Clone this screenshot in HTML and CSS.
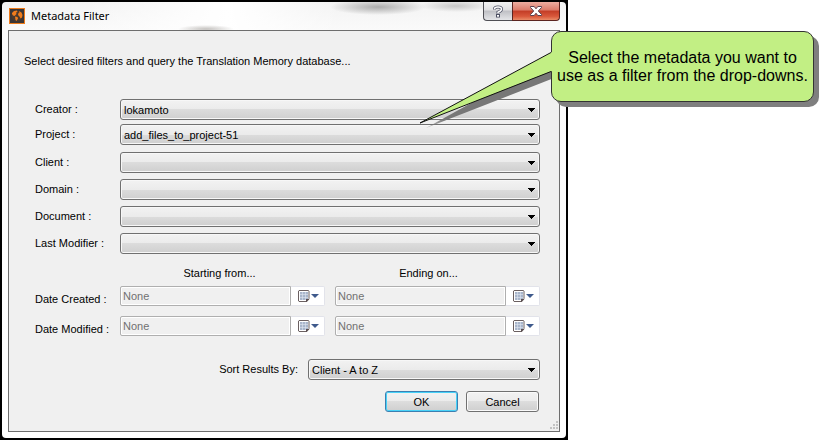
FILE: index.html
```html
<!DOCTYPE html>
<html lang="en">
<head>
<meta charset="utf-8">
<title>Metadata Filter</title>
<link rel="stylesheet" href="styles.css">
</head>
<body>
<svg class="defs" aria-hidden="true">
  <symbol id="calendar" viewBox="0 0 12 12">
    <path d="M1 .5h9.500l.5.5v7.500l-2 3H1l-.5-.5V1z" fill="#fff" stroke="#6b6061"/>
    <rect x="2" y="2" width="8" height="8" fill="#a9b6cb"/>
    <path d="M2 4.500h8M2 7.500h8M4.500 2v8M7.500 2v8" stroke="#dfe6f0" stroke-width=".6"/>
    <path d="M8 12V9h3.500z" fill="#5c5052"/>
  </symbol>
</svg>
<main class="stage">
  <section class="window">
    <header class="titlebar">
      <svg class="app-icon" viewBox="0 0 16 16" aria-hidden="true">
        <rect x=".5" y=".5" width="15" height="15" fill="#3b3636" stroke="#ee7b1a"/>
        <circle cx="8" cy="8" r="5.500" fill="#4b3a2e"/>
        <path d="M3 5l2-2 3-.5.5 1.500-1.500.5.5 1.500L5.500 8 4 7.500 3 6z M6 8.500l2.500.5.5 1.500L7.500 13 6.500 12z M10 3l2.500 1.500 1 2.500-.5 2.500-1.500 1L10.500 8.500 9 7l.5-2 1-.5z" fill="#f07c1c"/>
      </svg>
      <h1 class="title">Metadata Filter</h1>
      <div class="caption-buttons">
        <button class="caption help" aria-label="Help">
          <svg viewBox="0 0 10 13" width="10" height="13"><g fill="none"><path d="M1.500 4.500V4q0-2 3.500-2t3.500 2-3.500 3.200v1.600" stroke="#4c4f63" stroke-width="3"/><rect x="3" y="9" width="4" height="3.500" fill="#4c4f63"/><path d="M1.500 4.300V4q0-2 3.500-2t3.500 2-3.500 3.200v1.300" stroke="#fff" stroke-width="1.500"/><rect x="4" y="10" width="2" height="1.700" fill="#fff"/></g></svg>
        </button>
        <button class="caption close" aria-label="Close">
          <svg viewBox="0 0 12 10" width="12" height="10"><path d="M.5.5h3.700L6 2.800 7.800.5h3.700v1L8.300 5l3.200 3.500v1H7.800L6 7.200 4.200 9.500H.5v-1L3.700 5 .5 1.500z" fill="#fff" stroke="#5a4350"/></svg>
        </button>
      </div>
    </header>
    <form class="panel" onsubmit="return false">
      <p class="intro">Select desired filters and query the Translation Memory database...</p>
      <div class="fields">
        <div class="group">
          <label for="creator">Creator :</label>
          <select id="creator"><option>lokamoto</option></select>
          <label for="project">Project :</label>
          <select id="project"><option>add_files_to_project-51</option></select>
        </div>
        <div class="group roomy">
          <label for="client">Client :</label>
          <select id="client"><option></option></select>
          <label for="domain">Domain :</label>
          <select id="domain"><option></option></select>
          <label for="document">Document :</label>
          <select id="document"><option></option></select>
          <label for="modifier">Last Modifier :</label>
          <select id="modifier"><option></option></select>
        </div>
        <div class="dates">
          <span class="head start">Starting from...</span>
          <span class="head end">Ending on...</span>
          <label for="created-from">Date Created :</label>
          <div class="date"><input id="created-from" value="None" disabled><button aria-label="Pick created start date"><svg class="cal"><use href="#calendar"/></svg><i class="arrow"></i></button></div>
          <div class="date"><input aria-label="Date created, ending on" value="None" disabled><button aria-label="Pick created end date"><svg class="cal"><use href="#calendar"/></svg><i class="arrow"></i></button></div>
          <label for="modified-from">Date Modified :</label>
          <div class="date"><input id="modified-from" value="None" disabled><button aria-label="Pick modified start date"><svg class="cal"><use href="#calendar"/></svg><i class="arrow"></i></button></div>
          <div class="date"><input aria-label="Date modified, ending on" value="None" disabled><button aria-label="Pick modified end date"><svg class="cal"><use href="#calendar"/></svg><i class="arrow"></i></button></div>
        </div>
        <div class="sort">
          <label for="sort">Sort Results By:</label>
          <select id="sort"><option>Client - A to Z</option></select>
        </div>
        <div class="actions">
          <button class="push primary">OK</button>
          <button class="push">Cancel</button>
        </div>
      </div>
      <svg class="grip" viewBox="0 0 9 9" aria-hidden="true"><path d="M7 0h2v2H7zM7 3h2v2H7zM7 6h2v2H7zM4 3h2v2H4zM4 6h2v2H4zM1 6h2v2H1z" fill="#c3c3c3"/></svg>
    </form>
  </section>
  <aside class="callout">
    <svg class="tail" viewBox="0 0 140 84" aria-hidden="true">
      <defs><linearGradient id="fade"><stop offset="0" stop-color="#777" stop-opacity=".4"/><stop offset=".15" stop-color="#777"/></linearGradient></defs>
      <path d="M10 82L138 11V32z" fill="url(#fade)"/>
    </svg>
    <p class="bubble">Select the metadata you want to<br>use as a filter from the drop-downs.</p>
    <svg class="tail" viewBox="0 0 140 84" aria-hidden="true">
      <path d="M136 6L4 77L136 25z" fill="#c2ef84"/>
      <path d="M135 6.500L4 77L135 25.500" fill="none" stroke="#111" stroke-linejoin="bevel"/>
    </svg>
  </aside>
</main>
</body>
</html>
```
FILE: styles.css
```css
* { box-sizing: border-box; }

body {
  margin: 0;
  background: #fff;
  color: #000;
  font: 11px/16px "Liberation Sans", Arial, sans-serif;
}

button, input, select { font: inherit; color: inherit; margin: 0; }
h1, p { margin: 0; }
.defs { display: none; }

.stage {
  position: relative;
  padding-right: 261px;
  background: linear-gradient(90deg, #000, #000) content-box;
}

.window {
  border: 2px solid #000;
  border-radius: 6px;
  padding: 0 6px 6px;
  background:
    radial-gradient(ellipse 48px 8px at 376px 5px, #999c, #9990) no-repeat,
    radial-gradient(ellipse 36px 6px at 454px 4px, #aaa9, #aaa0) no-repeat,
    radial-gradient(ellipse 28px 4px at 204px 27px, #a8a4a0aa, #a8a4a000) no-repeat,
    linear-gradient(90deg, #f3f3f300 15%, #fff 40%, #f3f3f300 60%) no-repeat,
    linear-gradient(#f3f3f3, #fafafa 28px, #fff) no-repeat;
  background-color: #fff;
}

.titlebar {
  display: flex;
  align-items: flex-start;
  height: 28px;
}
.app-icon { width: 16px; height: 16px; margin: 6px 6px 0 1px; }
.title { flex: 1; margin-top: 6px; font: 11px/16px "Noto Sans", "Open Sans", sans-serif; }

.caption-buttons { display: flex; }
.caption {
  display: flex;
  align-items: center;
  justify-content: center;
  height: 19px;
  padding: 0;
  border: 1px solid #4f4f55;
  border-top: 0;
}
.help {
  width: 29px;
  border-radius: 0 0 0 4px;
  border-right: 0;
  background: linear-gradient(#f2f2f2, #dedee0 45%, #bfc0c5 50%, #e4e5e8);
}
.close {
  width: 48px;
  border-color: #5b2420;
  border-radius: 0 0 4px 0;
  background: linear-gradient(#edada0, #dc7a69 45%, #c33c26 50%, #d9593c 80%, #e98c68);
}

.panel {
  position: relative;
  border: 1px solid #6e6e6e;
  padding: 22px 19px 19px 15px;
  background: #f0f0f0;
}
.fields { margin: 30px 0 0 11px; }

.group {
  display: grid;
  grid-template-columns: 85px 1fr;
  row-gap: 4px;
  align-items: center;
}
.group label, .sort label { padding-bottom: 2px; }
.roomy { row-gap: 6px; margin-top: 7px; }

select {
  width: 100%;
  height: 21px;
  padding: 1px 20px 0 3px;
  appearance: none;
  border: 1px solid #707070;
  border-radius: 3px;
  box-shadow: inset 0 0 0 1px #f7f7f7;
  background:
    linear-gradient(#000, #000) right 4px top 8px / 7px 1px no-repeat,
    linear-gradient(#000, #000) right 5px top 9px / 5px 1px no-repeat,
    linear-gradient(#000, #000) right 6px top 10px / 3px 1px no-repeat,
    linear-gradient(#000, #000) right 7px top 11px / 1px 1px no-repeat,
    linear-gradient(#f2f2f2, #ebebeb 50%, #dcdcdc 50%, #cfcfcf);
}

.dates {
  display: grid;
  grid-template-columns: 75px 1fr 1fr;
  gap: 10px;
  margin-top: 11px;
}
.dates label { padding-top: 5px; height: 20px; white-space: nowrap; }
.head { text-align: center; margin-bottom: -5px; }
.start { grid-column: 2; padding-right: 6px; }
.end { padding-right: 18px; }

.date { display: flex; height: 20px; }
.date input {
  flex: 1;
  min-width: 0;
  padding: 0 2px;
  border: 1px solid #afafaf;
  border-radius: 2px 0 0 2px;
  box-shadow: inset 0 0 0 1px #fff;
  background: #f0f0f0;
  color: #707070;
}
.date button {
  display: flex;
  align-items: center;
  width: 34px;
  padding: 0 0 0 7px;
  border: 1px solid #e2e3ea;
  border-left: 0;
  border-radius: 0 2px 2px 0;
  background: #fff;
}
.cal { width: 12px; height: 12px; }
.arrow {
  margin-left: 1px;
  border: 4px solid transparent;
  border-top-color: #3f5a8c;
  border-bottom: 0;
}

.sort {
  display: grid;
  grid-template-columns: 1fr 232px;
  column-gap: 10px;
  align-items: center;
  margin-top: 23px;
  text-align: right;
}

.actions { display: flex; justify-content: flex-end; gap: 8px; margin-top: 11px; padding-right: 1px; }
.push {
  width: 73px;
  height: 21px;
  padding: 0;
  border: 1px solid #707070;
  border-radius: 3px;
  box-shadow: inset 0 0 0 1px #fafafa;
  background: linear-gradient(#f2f2f2, #ebebeb 50%, #dddddd 50%, #cfcfcf);
}
.primary { border-color: #3c7fb1; box-shadow: inset 0 0 0 1px #48d2f8; }

.grip { position: absolute; right: 1px; bottom: 1px; width: 9px; height: 9px; }

.callout { position: absolute; top: 31px; right: 15px; width: 263px; }
.bubble {
  position: relative;
  height: 71px;
  padding-top: 17px;
  border: 1px solid #333;
  border-radius: 10px;
  background: #c2ef84;
  box-shadow: 5px 5px 0 #7f7f7f;
  font: 16px/18px "Liberation Sans", sans-serif;
  text-align: center;
  white-space: nowrap;
}
.tail {
  position: absolute;
  left: -135px;
  top: 15px;
  width: 140px;
  height: 84px;
}
```
